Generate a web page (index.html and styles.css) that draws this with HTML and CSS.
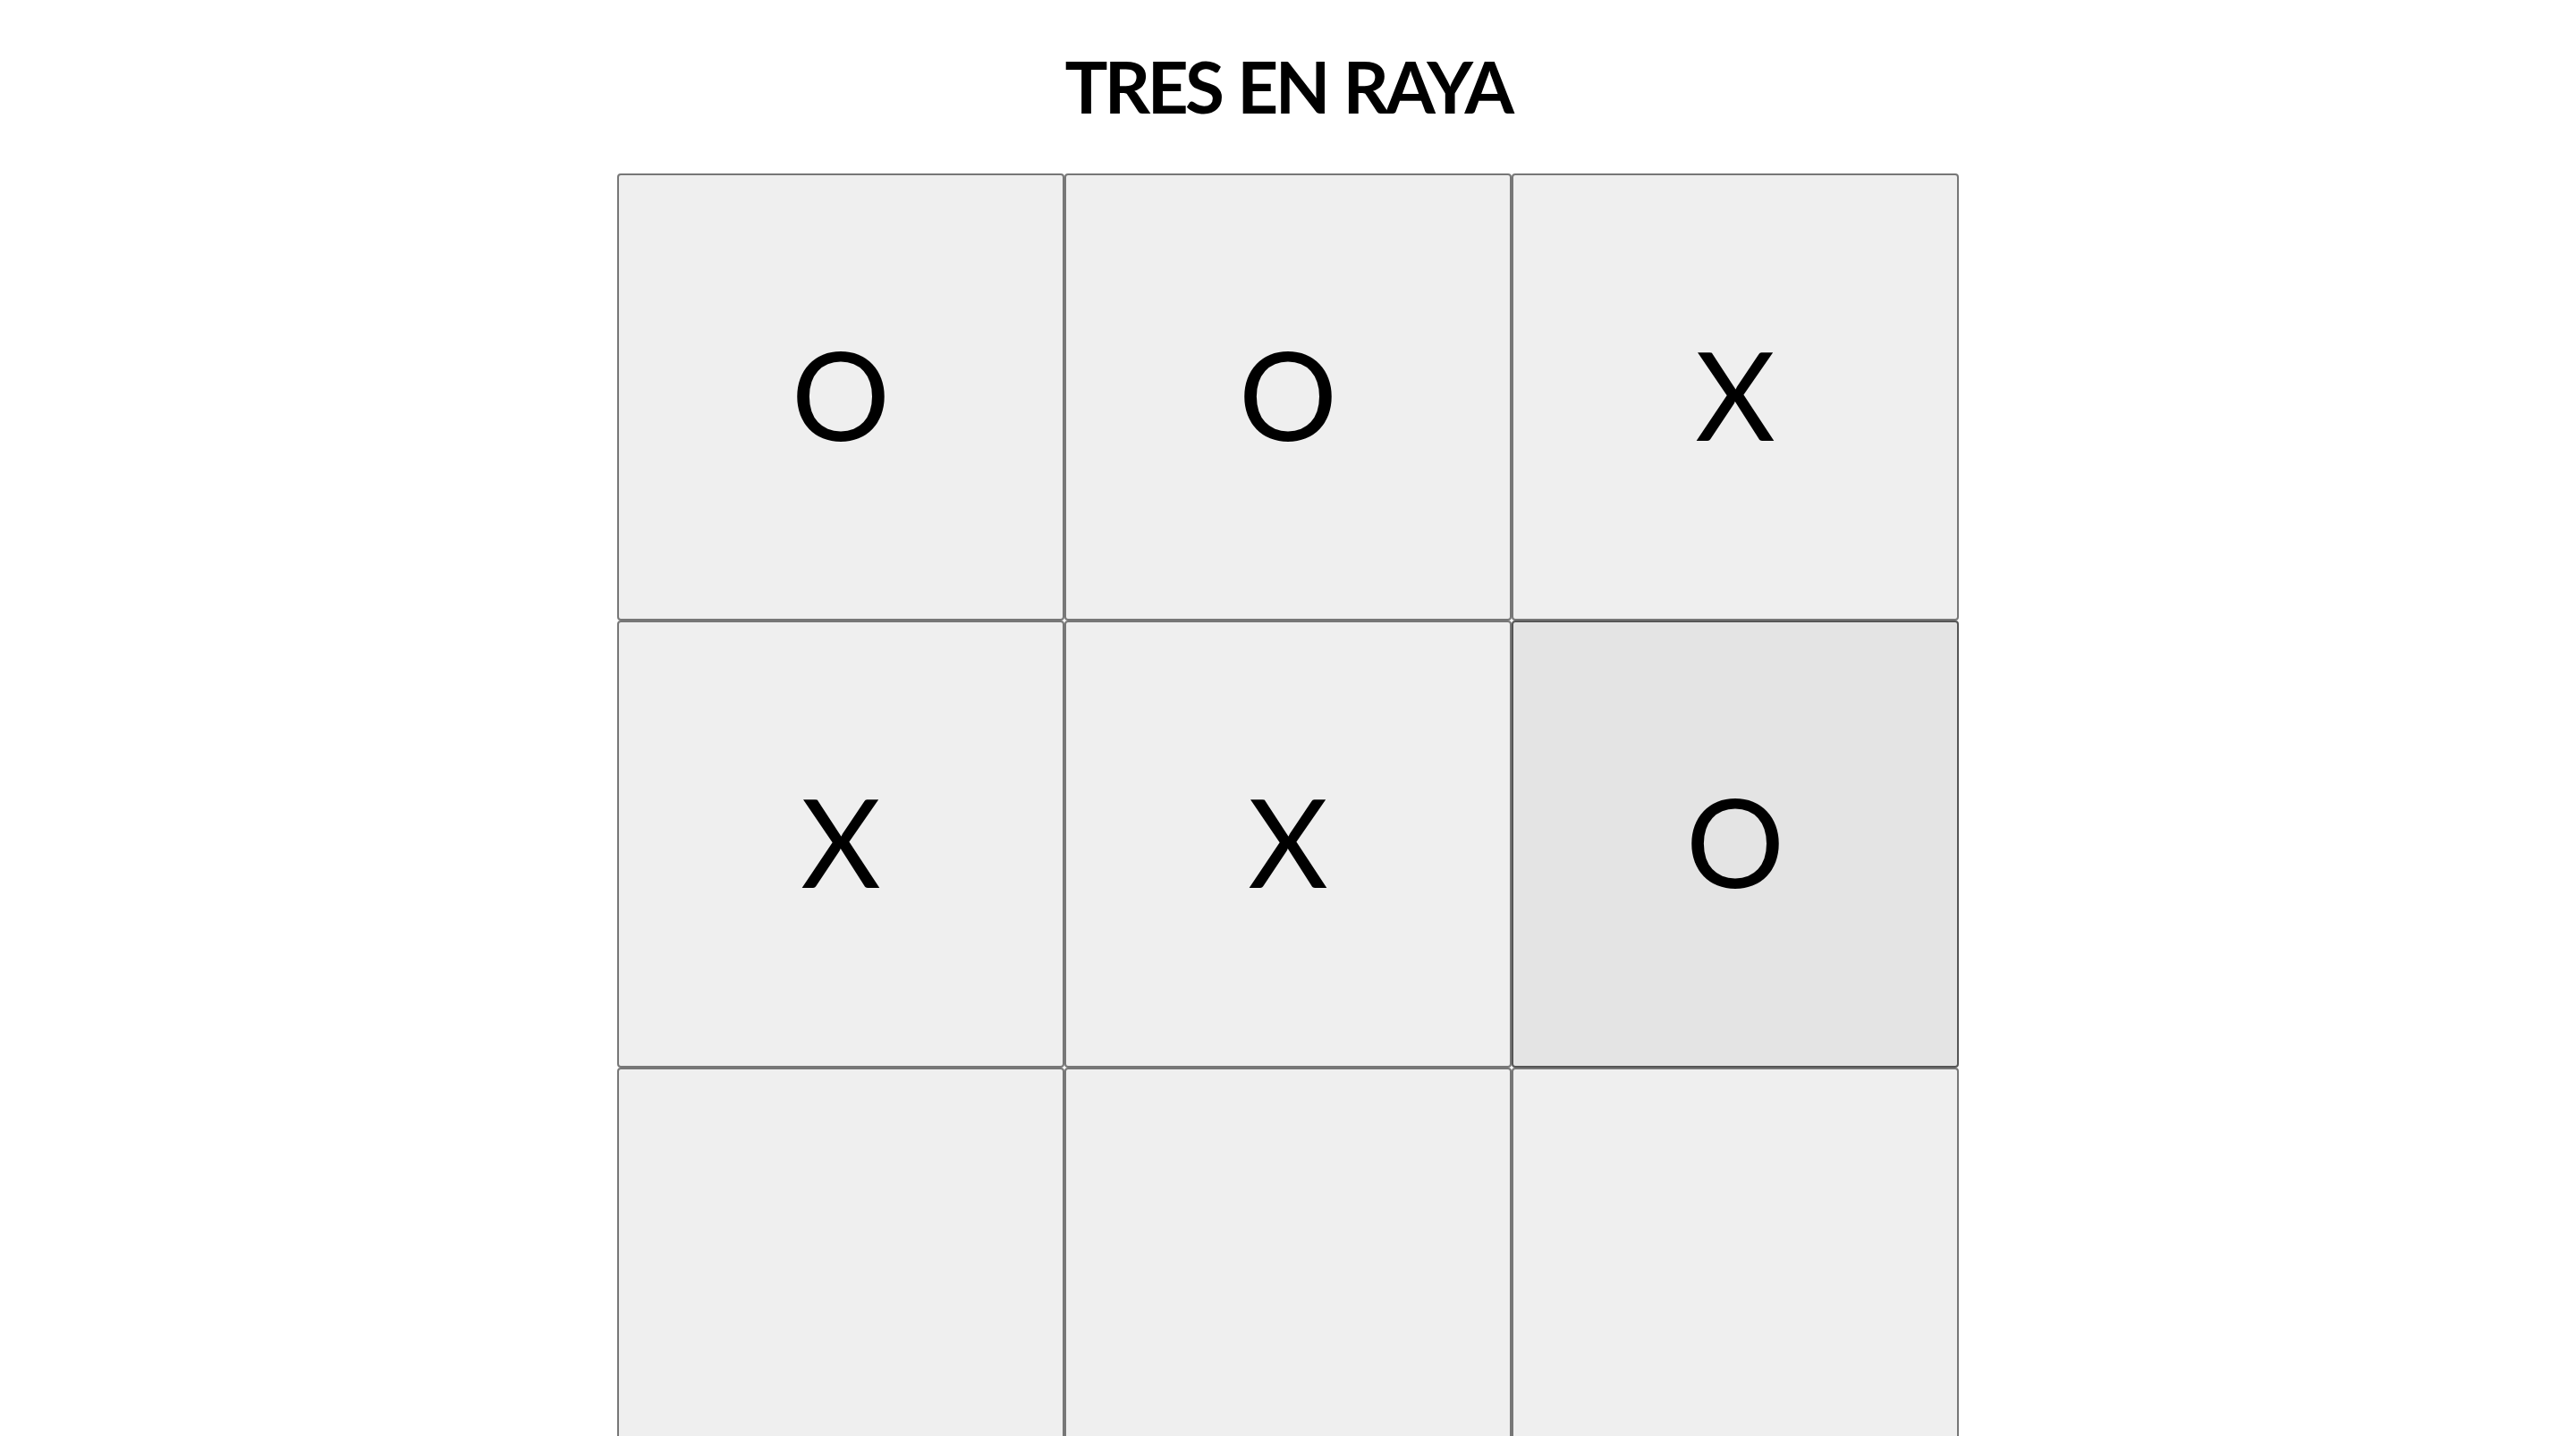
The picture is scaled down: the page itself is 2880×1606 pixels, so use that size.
FILE: index.html
```html
<!DOCTYPE html>
<html lang="es">
<head>
<meta charset="utf-8">
<title>Tres en raya</title>
<link rel="stylesheet" href="styles.css">
</head>
<body>
<main class="game">
  <h1 class="title">TRES EN RAYA</h1>
  <div class="board">
    <div class="cell">O</div>
    <div class="cell">O</div>
    <div class="cell">X</div>
    <div class="cell">X</div>
    <div class="cell">X</div>
    <div class="cell cell-hover">O</div>
    <div class="cell"></div>
    <div class="cell"></div>
    <div class="cell"></div>
  </div>
</main>
</body>
</html>
```
FILE: styles.css
```css
html, body {
  margin: 0;
  padding: 0;
  background: #ffffff;
}
body {
  font-family: Lato, "Liberation Sans", sans-serif;
  color: #000;
}
.game {
  display: flex;
  flex-direction: column;
  align-items: center;
  padding-top: 48px;
}
.title {
  margin: 0 0 50px 0;
  font-size: 80px;
  font-weight: 700;
  line-height: normal;
  letter-spacing: -3.6px;
  word-spacing: 2px;
}
.board {
  display: grid;
  grid-template-columns: repeat(3, 500px);
  grid-auto-rows: 500px;
}
.cell {
  box-sizing: border-box;
  border: 2px solid #777;
  border-radius: 4px;
  background: #efefef;
  display: flex;
  align-items: center;
  justify-content: center;
  padding-bottom: 8px;
  font-size: 138px;
  font-weight: 400;
  line-height: 1;
}
.cell-hover {
  background: #e4e4e4;
  border-color: #555;
}
```
